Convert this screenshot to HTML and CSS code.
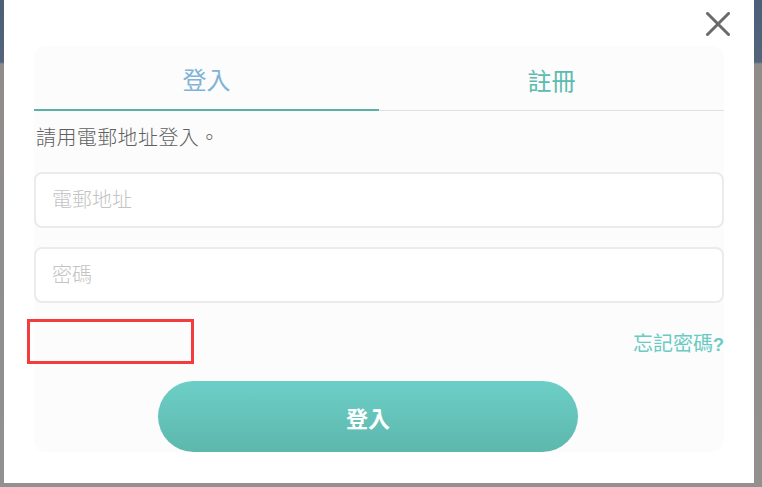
FILE: index.html
```html
<!DOCTYPE html>
<html lang="zh-Hant">
<head>
<meta charset="utf-8">
<link rel="stylesheet" href="styles.css">
</head>
<body>
<div class="backdrop">
  <div class="modal">
    <button class="close" aria-label="關閉">
      <svg width="24" height="24" viewBox="0 0 24 24"><path d="M1.5 1.5 L22.5 22.5 M22.5 1.5 L1.5 22.5" stroke="#6a6a6a" stroke-width="3" stroke-linecap="round" fill="none"/></svg>
    </button>
    <div class="panel">
      <div class="tabs">
        <div class="tab tab-active">登入</div>
        <div class="tab tab-other">註冊</div>
      </div>
      <p class="hint">請用電郵地址登入。</p>
      <div class="field">電郵地址</div>
      <div class="field field-second">密碼</div>
      <div class="row">
        <div class="marker"></div>
        <a class="forgot">忘記密碼<b>?</b></a>
      </div>
      <button class="submit">登入</button>
    </div>
  </div>
</div>
</body>
</html>
```

FILE: styles.css
```css
* { box-sizing: border-box; }
html, body { margin: 0; padding: 0; }
body {
  width: 762px;
  height: 487px;
  overflow: hidden;
  font-family: "Noto Sans CJK TC", "Noto Sans", sans-serif;
  background: linear-gradient(180deg, #4c5f77 0, #52657b 62px, #8f8c8a 64px, #929190 100%);
}
.backdrop {
  padding-left: 4px;
}
.modal {
  position: relative;
  width: 750px;
  height: 483px;
  background: #ffffff;
  padding: 46px 30px 31px 30px;
}
.close {
  position: absolute;
  top: 12px;
  left: 702px;
  width: 24px;
  height: 24px;
  padding: 0;
  border: 0;
  background: none;
  display: block;
}
.close svg { display: block; }
.panel {
  background: #fcfcfc;
  border-radius: 12px;
  height: 406px;
}
.tabs {
  display: flex;
  height: 65px;
  box-shadow: inset 0 -1px 0 #e0e0e0;
}
.tab {
  flex: 1;
  display: flex;
  align-items: center;
  justify-content: center;
  font-size: 24px;
  padding-top: 1px;
}
.tab-active {
  color: #80b3d6;
  border-bottom: 2px solid #5cb0a4;
}
.tab-other {
  color: #5bbbaf;
}
.hint {
  margin: 11px 0 0 0;
  padding-left: 2px;
  font-size: 20px;
  line-height: 30px;
  letter-spacing: 0.4px;
  color: #606060;
  font-weight: 300;
}
.field {
  margin-top: 20px;
  height: 56px;
  border: 2px solid #ebebeb;
  border-radius: 8px;
  background: #ffffff;
  padding-left: 16px;
  padding-bottom: 3px;
  display: flex;
  align-items: center;
  font-size: 20px;
  color: #c3c3c3;
  font-weight: 300;
}
.field-second { margin-top: 19px; }
.row {
  margin-top: 16px;
  height: 45px;
  display: flex;
  align-items: center;
  justify-content: space-between;
}
.marker {
  margin-left: -7px;
  width: 167px;
  height: 45px;
  border: 3px solid #f43c3c;
}
.forgot {
  font-size: 20px;
  color: #6bcbc3;
  padding-top: 2px;
}
.forgot b {
  font-family: "Liberation Sans", Arial, sans-serif;
  font-weight: bold;
  font-size: 18px;
}
.submit {
  display: block;
  margin: 17px 0 0 124px;
  width: 420px;
  height: 71px;
  border: 0;
  border-radius: 36px;
  background: linear-gradient(180deg, #6ccfc7 0%, #5db7ad 100%);
  color: #ffffff;
  font-family: "Noto Sans CJK TC", "Noto Sans", sans-serif;
  font-size: 22px;
  font-weight: bold;
}
```
